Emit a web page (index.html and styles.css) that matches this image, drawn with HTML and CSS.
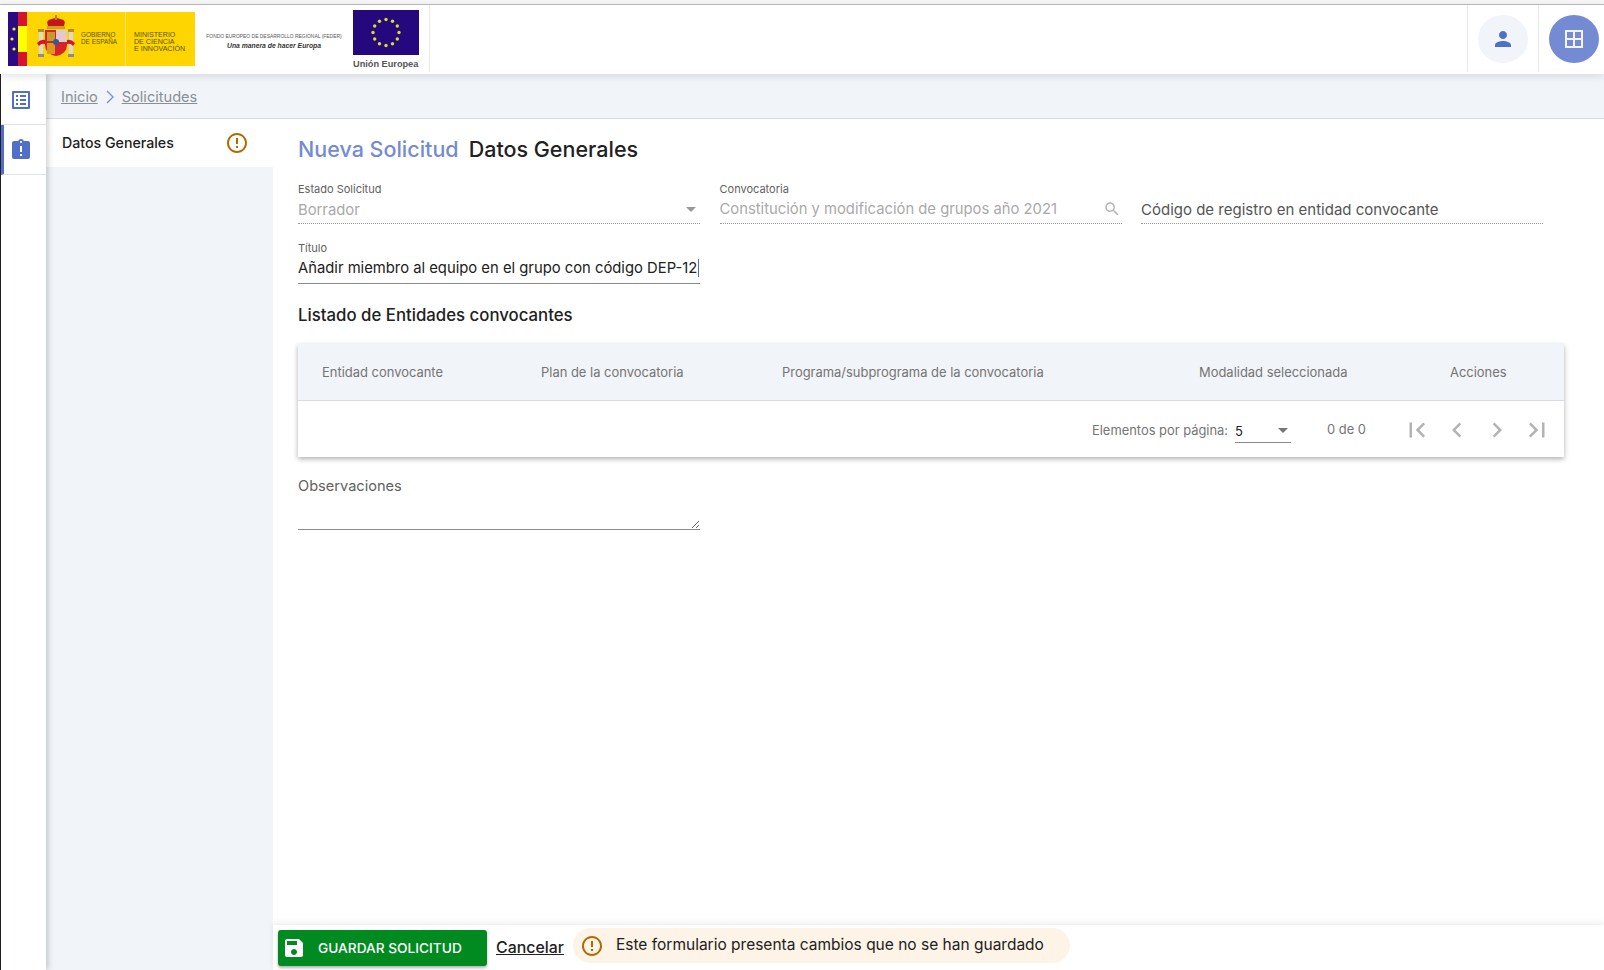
FILE: index.html
```html
<!DOCTYPE html>
<html lang="es">
<head>
  <meta charset="UTF-8">
  <title>Nueva Solicitud</title>
  <link rel="stylesheet" href="styles.css">
</head>
<body>
  <div class="top-strip"></div>

  <header class="header">
    <div class="logos">
      <svg class="logo-gob" width="187" height="54" viewBox="0 0 187 54">
        <rect width="187" height="54" fill="#ffd500"/>
        <rect x="117" width="1" height="54" fill="#ffe46a"/>
        <rect width="10" height="54" fill="#2b0a82"/>
        <rect x="10" width="9" height="54" fill="#d8142a"/>
        <rect x="10" y="14" width="9" height="26" fill="#ffff00"/>
        <circle cx="6" cy="17" r="1.6" fill="#e8e84a"/>
        <circle cx="4" cy="27" r="1.6" fill="#e8e84a"/>
        <circle cx="6" cy="37" r="1.6" fill="#e8e84a"/>
        <!-- pillars -->
        <rect x="31" y="19" width="4" height="24" fill="#d9d9d9"/>
        <rect x="61" y="19" width="4" height="24" fill="#d9d9d9"/>
        <rect x="30" y="17" width="6" height="3" fill="#b8892a"/>
        <rect x="60" y="17" width="6" height="3" fill="#b8892a"/>
        <rect x="30" y="42" width="6" height="3" fill="#8c8c8c"/>
        <rect x="60" y="42" width="6" height="3" fill="#8c8c8c"/>
        <!-- crown -->
        <path d="M40 14 q-3 -6 4 -7 q4 -2 8 0 q7 1 4 7z" fill="#c8141f"/>
        <rect x="47" y="3" width="2" height="5" fill="#b8892a"/>
        <rect x="39" y="14" width="18" height="3" fill="#c9a227"/>
        <!-- shield -->
        <path d="M37 18 h22 v15 q0 9 -11 11 q-11 -2 -11 -11z" fill="#d8232a"/>
        <rect x="48" y="18" width="11" height="12" fill="#e4c9c9"/>
        <rect x="39" y="20" width="8" height="9" fill="#c79a2a"/>
        <rect x="39" y="31" width="8" height="11" fill="#d89b1f"/>
        <circle cx="48" cy="30" r="3" fill="#2a5aa0"/>
        <!-- ribbons -->
        <path d="M29 31 q4 -4 8 -3 v4 q-4 -1 -6 2z" fill="#d8142a"/>
        <path d="M67 31 q-4 -4 -8 -3 v4 q4 -1 6 2z" fill="#d8142a"/>
        <text class="logo-txt" x="73" y="24.5">GOBIERNO</text>
        <text class="logo-txt" x="73" y="31.5">DE ESPAÑA</text>
        <text class="logo-txt logo-txt-min" x="126" y="24.5">MINISTERIO</text>
        <text class="logo-txt logo-txt-min" x="126" y="31.5">DE CIENCIA</text>
        <text class="logo-txt logo-txt-min" x="126" y="38.5">E INNOVACIÓN</text>
      </svg>
      <div class="feder">
        <div class="feder-top">FONDO EUROPEO DE DESARROLLO REGIONAL (FEDER)</div>
        <div class="feder-sub">Una manera de hacer Europa</div>
      </div>
      <div class="eu">
        <svg width="66" height="45" viewBox="0 0 66 45">
          <rect width="66" height="45" fill="#25087e"/>
          <g fill="#d8e020">
            <circle cx="33" cy="9.5" r="1.7"/><circle cx="39.5" cy="11.3" r="1.7"/>
            <circle cx="44.3" cy="16" r="1.7"/><circle cx="46" cy="22.5" r="1.7"/>
            <circle cx="44.3" cy="29" r="1.7"/><circle cx="39.5" cy="33.7" r="1.7"/>
            <circle cx="33" cy="35.5" r="1.7"/><circle cx="26.5" cy="33.7" r="1.7"/>
            <circle cx="21.7" cy="29" r="1.7"/><circle cx="20" cy="22.5" r="1.7"/>
            <circle cx="21.7" cy="16" r="1.7"/><circle cx="26.5" cy="11.3" r="1.7"/>
          </g>
        </svg>
        <div class="eu-label">Unión Europea</div>
      </div>
    </div>
    <div class="head-spacer"></div>
    <div class="head-btn">
      <span class="circle circle-light">
        <svg class="ico" width="24" height="24" viewBox="0 0 24 24" fill="#4f6fc9"><path d="M12 12c2.21 0 4-1.79 4-4s-1.79-4-4-4-4 1.79-4 4 1.79 4 4 4zm0 2c-2.67 0-8 1.34-8 4v2h16v-2c0-2.66-5.33-4-8-4z"/></svg>
      </span>
    </div>
    <div class="head-btn head-btn-last">
      <span class="circle circle-blue">
        <svg class="ico" width="24" height="24" viewBox="0 0 24 24" fill="#f1f4f8"><path d="M3 3v18h18V3H3zm8 16H5v-6h6v6zm0-8H5V5h6v6zm8 8h-6v-6h6v6zm0-8h-6V5h6v6z"/></svg>
      </span>
    </div>
  </header>

  <div class="page">
    <nav class="rail">
      <a class="rail-item">
        <svg width="24" height="24" viewBox="0 0 24 24" fill="#4f6fc9"><path d="M19 5v14H5V5h14m1.1-2H3.9c-.5 0-.9.4-.9.9v16.2c0 .4.4.9.9.9h16.2c.4 0 .9-.5.9-.9V3.9c0-.5-.5-.9-.9-.9zM11 7h6v2h-6V7zm0 4h6v2h-6v-2zm0 4h6v2h-6zM7 7h2v2H7zm0 4h2v2H7zm0 4h2v2H7z"/></svg>
      </a>
      <a class="rail-item rail-active">
        <svg width="24" height="24" viewBox="0 0 24 24" fill="#4f6fc9"><path d="M19 3h-4.18C14.4 1.84 13.3 1 12 1c-1.3 0-2.4.84-2.82 2H5c-1.1 0-2 .9-2 2v14c0 1.1.9 2 2 2h14c1.1 0 2-.9 2-2V5c0-1.1-.9-2-2-2zm-6 15h-2v-2h2v2zm0-4h-2V8h2v6zm-1-9c-.55 0-1-.45-1-1s.45-1 1-1 1 .45 1 1-.45 1-1 1z"/></svg>
      </a>
    </nav>

    <div class="main">
      <div class="breadcrumb">
        <a class="crumb">Inicio</a>
        <svg class="crumb-sep" width="10" height="14" viewBox="0 0 10 14" fill="none" stroke="#7b93d6" stroke-width="1.4"><path d="M2 1l6 6-6 6"/></svg>
        <a class="crumb">Solicitudes</a>
      </div>

      <div class="body-row">
        <aside class="sidebar">
          <div class="side-item">
            <span class="side-text">Datos Generales</span>
            <svg width="24" height="24" viewBox="0 0 24 24" fill="#b26a00"><path d="M11 15h2v2h-2zm0-8h2v6h-2zm.99-5C6.47 2 2 6.48 2 12s4.47 10 9.99 10C17.52 22 22 17.52 22 12S17.52 2 11.99 2zM12 20c-4.42 0-8-3.58-8-8s3.58-8 8-8 8 3.58 8 8-3.58 8-8 8z"/></svg>
          </div>
        </aside>

        <div class="content">
          <div class="form">
            <h1 class="title"><span class="title-blue">Nueva Solicitud</span><span>Datos Generales</span></h1>

            <div class="field-row">
              <div class="field">
                <label>Estado Solicitud</label>
                <div class="value value-off">
                  <span>Borrador</span>
                  <span class="arrow arrow-grey"></span>
                </div>
              </div>
              <div class="field">
                <label>Convocatoria</label>
                <div class="value value-off value-conv">
                  <span>Constitución y modificación de grupos año 2021</span>
                  <svg width="18" height="18" viewBox="0 0 24 24" fill="#b5b5b5"><path d="M15.5 14h-.79l-.28-.27C15.41 12.59 16 11.11 16 9.5 16 5.91 13.09 3 9.5 3S3 5.91 3 9.5 5.91 16 9.5 16c1.61 0 3.09-.59 4.23-1.57l.27.28v.79l5 4.99L20.49 19l-4.99-5zm-6 0C7.01 14 5 11.99 5 9.5S7.01 5 9.5 5 14 7.01 14 9.5 11.99 14 9.5 14z"/></svg>
                </div>
              </div>
              <div class="field">
                <label>&nbsp;</label>
                <div class="value value-hint"><span>Código de registro en entidad convocante</span></div>
              </div>
            </div>

            <div class="field field-title">
              <label>Título</label>
              <div class="value value-edit"><span class="caret">Añadir miembro al equipo en el grupo con código DEP-12</span></div>
            </div>

            <h2 class="section">Listado de Entidades convocantes</h2>

            <div class="card">
              <table class="grid">
                <colgroup>
                  <col class="col-a"><col class="col-b"><col class="col-c"><col class="col-d"><col>
                </colgroup>
                <thead>
                  <tr>
                    <th>Entidad convocante</th>
                    <th>Plan de la convocatoria</th>
                    <th>Programa/subprograma de la convocatoria</th>
                    <th>Modalidad seleccionada</th>
                    <th>Acciones</th>
                  </tr>
                </thead>
              </table>
              <div class="pager">
                <span class="pager-label">Elementos por página:</span>
                <div class="pager-select"><span>5</span><span class="arrow"></span></div>
                <span class="pager-range">0 de 0</span>
                <div class="pager-btns">
                  <svg width="30" height="30" viewBox="0 0 24 24" fill="#b3b3b3"><path d="M18.41 16.59L13.82 12l4.59-4.59L17 6l-6 6 6 6zM6 6h2v12H6z"/></svg>
                  <svg width="30" height="30" viewBox="0 0 24 24" fill="#b3b3b3"><path d="M15.41 7.41L14 6l-6 6 6 6 1.41-1.41L10.83 12z"/></svg>
                  <svg width="30" height="30" viewBox="0 0 24 24" fill="#b3b3b3"><path d="M10 6L8.59 7.41 13.17 12l-4.58 4.59L10 18l6-6z"/></svg>
                  <svg width="30" height="30" viewBox="0 0 24 24" fill="#b3b3b3"><path d="M5.59 7.41L10.18 12l-4.59 4.59L7 18l6-6-6-6zM16 6h2v12h-2z"/></svg>
                </div>
              </div>
            </div>

            <div class="notes">
              <label for="obs">Observaciones</label>
              <textarea id="obs"></textarea>
            </div>
          </div>

          <footer class="footer">
            <button class="save-btn">
              <svg width="24" height="24" viewBox="0 0 24 24" fill="#fff"><path d="M17 3H5c-1.11 0-2 .9-2 2v14c0 1.1.89 2 2 2h14c1.1 0 2-.9 2-2V7l-4-4zm-5 16c-1.66 0-3-1.34-3-3s1.34-3 3-3 3 1.34 3 3-1.34 3-3 3zm3-10H5V5h10v4z"/></svg>
              <span>GUARDAR SOLICITUD</span>
            </button>
            <a class="cancel">Cancelar</a>
            <div class="unsaved">
              <svg width="24" height="24" viewBox="0 0 24 24" fill="#b26a00"><path d="M11 15h2v2h-2zm0-8h2v6h-2zm.99-5C6.47 2 2 6.48 2 12s4.47 10 9.99 10C17.52 22 22 17.52 22 12S17.52 2 11.99 2zM12 20c-4.42 0-8-3.58-8-8s3.58-8 8-8 8 3.58 8 8-3.58 8-8 8z"/></svg>
              <span class="unsaved-text">Este formulario presenta cambios que no se han guardado</span>
            </div>
          </footer>
        </div>
      </div>
    </div>
  </div>
</body>
</html>
```

FILE: styles.css
```css
* {
  box-sizing: border-box;
}

body {
  margin: 0;
  height: 970px;
  overflow: hidden;
  display: flex;
  flex-direction: column;
  font-family: Inter, "Noto Sans", sans-serif;
  color: #212121;
  background: #fff;
}

.top-strip {
  height: 5px;
  background: #f6f6f6;
  border-bottom: 1px solid #bdbdbd;
}

/* header */
.header {
  height: 69px;
  display: flex;
  background: #fff;
  position: relative;
  z-index: 3;
  box-shadow: 0 2px 8px rgba(0, 0, 0, .12);
}

.logos {
  width: 430px;
  height: 67px;
  padding: 5px 0 0 8px;
  display: flex;
  border-right: 1px solid #e9e9e9;
}

.logo-gob {
  margin-top: 2px;
}

.logo-txt {
  font-family: "Liberation Sans", sans-serif;
  font-size: 6.4px;
  fill: #5c5200;
}

.logo-txt-min {
  font-size: 7.1px;
}

.feder {
  width: 158px;
  padding-top: 23px;
  text-align: center;
}

.feder-top {
  font-family: "Liberation Sans", sans-serif;
  font-size: 4.95px;
  line-height: 8px;
  color: #555;
  white-space: nowrap;
}

.feder-sub {
  font-family: "Liberation Sans", sans-serif;
  font-size: 6.8px;
  line-height: 9px;
  font-style: italic;
  font-weight: bold;
  color: #333;
}

.eu {
  width: 66px;
}

.eu svg {
  display: block;
}

.eu-label {
  margin-top: 3px;
  font-family: "Liberation Sans", sans-serif;
  font-size: 9.2px;
  line-height: 13px;
  font-weight: bold;
  color: #555;
  white-space: nowrap;
}

.head-spacer {
  flex: 1;
}

.head-btn {
  width: 71px;
  height: 67px;
  border-left: 1px solid #e9e9e9;
  display: flex;
  justify-content: center;
  padding-top: 10px;
}

.head-btn-last {
  width: 66px;
  justify-content: flex-start;
  padding-left: 10px;
}

.circle {
  width: 50px;
  height: 48px;
  border-radius: 50%;
  display: flex;
  align-items: center;
  justify-content: center;
}

.circle-light {
  background: #f1f4f8;
}

.circle-blue {
  background: #748bd4;
}

/* layout */
.page {
  flex: 1;
  min-height: 0;
  display: flex;
}

.rail {
  width: 46px;
  border-left: 1px solid #2a1a1e;
  background: #fff;
  position: relative;
  z-index: 2;
  box-shadow: 2px 0 6px rgba(0, 0, 0, .2);
}

.rail-item {
  height: 51px;
  display: flex;
  align-items: center;
  justify-content: center;
  border-bottom: 1px solid #dfe2e6;
  padding: 2px 5px 0 0;
}

.rail-active {
  height: 50px;
  border-left: 3px solid #4f6fc9;
  padding: 0 8px 0 0;
}

.main {
  flex: 1;
  min-width: 0;
  display: flex;
  flex-direction: column;
}

.breadcrumb {
  height: 45px;
  background: #f1f4f8;
  border-bottom: 1px solid #d8dce2;
  display: flex;
  align-items: center;
  padding: 2px 0 0 15px;
  gap: 7px;
  font-size: 14.6px;
  color: #8a8f96;
}

.crumb {
  text-decoration: underline;
}

.body-row {
  flex: 1;
  min-height: 0;
  display: flex;
}

.sidebar {
  width: 227px;
  background: #f1f4f8;
}

.side-item {
  height: 48px;
  background: #fff;
  display: flex;
  align-items: center;
  justify-content: space-between;
  padding: 0 24px 0 16px;
  font-size: 14.2px;
  font-weight: 500;
  color: #212121;
}

.side-text {
  margin-bottom: 2px;
}

.content {
  flex: 1;
  min-width: 0;
  display: flex;
  flex-direction: column;
}

.form {
  flex: 1;
  padding: 15px 39px 0 25px;
}

.title {
  margin: 0;
  display: flex;
  gap: 10px;
  font-size: 21.5px;
  line-height: 30px;
  font-weight: 500;
}

.title-blue {
  color: #748bd4;
}

.field-row {
  margin-top: 17px;
  display: grid;
  grid-template-columns: 402px 402px 402px;
  column-gap: 19.5px;
}

.field label {
  display: block;
  font-size: 11px;
  line-height: 16px;
  color: #616161;
}

.value {
  height: 27px;
  display: flex;
  align-items: center;
  justify-content: space-between;
  font-size: 14.8px;
  border-bottom: 1px dotted #9a9a9a;
  padding-bottom: 1px;
}

.value-conv {
  padding-bottom: 3px;
}

.value-off {
  color: #a9a9a9;
}

.value-hint {
  font-size: 15px;
  color: #555;
}

.value-edit {
  height: 28px;
  padding-bottom: 4px;
  border-bottom: 1px solid #8a8a8a;
  color: #212121;
}

.caret {
  border-right: 1px solid #4f6fc9;
  padding-right: 1px;
}

.arrow {
  width: 0;
  height: 0;
  border-left: 5px solid transparent;
  border-right: 5px solid transparent;
  border-top: 5px solid #757575;
  margin-right: 4px;
}

.arrow-grey {
  border-top-color: #9a9a9a;
}

.value svg {
  margin-right: 1px;
}

.field-title {
  margin-top: 16px;
  width: 402px;
}

.section {
  margin: 19px 0 0;
  font-size: 16.8px;
  line-height: 24px;
  font-weight: 500;
  color: #212121;
}

.card {
  margin-top: 17px;
  width: 1266px;
  height: 113px;
  box-shadow: 0 2px 5px rgba(0, 0, 0, .32);
  background: #fff;
}

.grid {
  width: 100%;
  table-layout: fixed;
  border-collapse: collapse;
}

.col-a { width: 219px; }
.col-b { width: 241px; }
.col-c { width: 417px; }
.col-d { width: 251px; }

.grid th {
  height: 56px;
  padding: 0 0 0 24px;
  background: #f1f4f8;
  border-bottom: 1px solid #d8dce2;
  text-align: left;
  font-size: 12.95px;
  font-weight: 400;
  color: #757575;
  white-space: nowrap;
}

.pager {
  height: 57px;
  display: flex;
  align-items: center;
  font-size: 12.9px;
  color: #757575;
  padding: 2px 0 0 794px;
}

.pager-select {
  margin-left: 7px;
  width: 56px;
  height: 23px;
  border-bottom: 1px solid #8a8a8a;
  display: flex;
  align-items: center;
  justify-content: space-between;
  color: #212121;
  font-size: 13px;
  margin-top: 2px;
}

.pager-select .arrow {
  margin-right: 3px;
}

.pager-range {
  margin-left: 36px;
  margin-bottom: 2px;
}

.pager-btns {
  margin-left: 36px;
  display: flex;
  gap: 10px;
}

.notes {
  margin-top: 18px;
}

.notes label {
  display: block;
  font-size: 14.6px;
  line-height: 22px;
  color: #616161;
}

.notes textarea {
  display: block;
  width: 402px;
  height: 33px;
  margin: 0;
  padding: 0;
  border: 0;
  border-bottom: 1px solid #8a8a8a;
  outline: none;
  background: transparent;
}

/* bottom bar */
.footer {
  height: 45px;
  flex: none;
  display: flex;
  align-items: center;
  padding-left: 5px;
  box-shadow: 0 -2px 6px rgba(0, 0, 0, .08);
  position: relative;
}

.save-btn {
  width: 209px;
  height: 36px;
  margin-top: 1px;
  border: 0;
  border-radius: 3px;
  background: #008a1f;
  color: #fff;
  font-family: inherit;
  font-size: 13.7px;
  font-weight: 500;
  display: flex;
  align-items: center;
  gap: 12px;
  padding: 0 0 0 4px;
  box-shadow: 0 2px 3px rgba(0, 0, 0, .3);
}

.cancel {
  margin-left: 9px;
  font-size: 15.9px;
  font-weight: 500;
  color: #212121;
  text-decoration: underline;
}

.unsaved {
  margin-left: 9px;
  width: 497px;
  height: 35px;
  margin-top: -4px;
  border-radius: 18px;
  background: #fdf4e7;
  display: flex;
  align-items: center;
  gap: 12px;
  padding-left: 7px;
  font-size: 15.5px;
  color: #212121;
}

.unsaved-text {
  margin-bottom: 2px;
}
```
